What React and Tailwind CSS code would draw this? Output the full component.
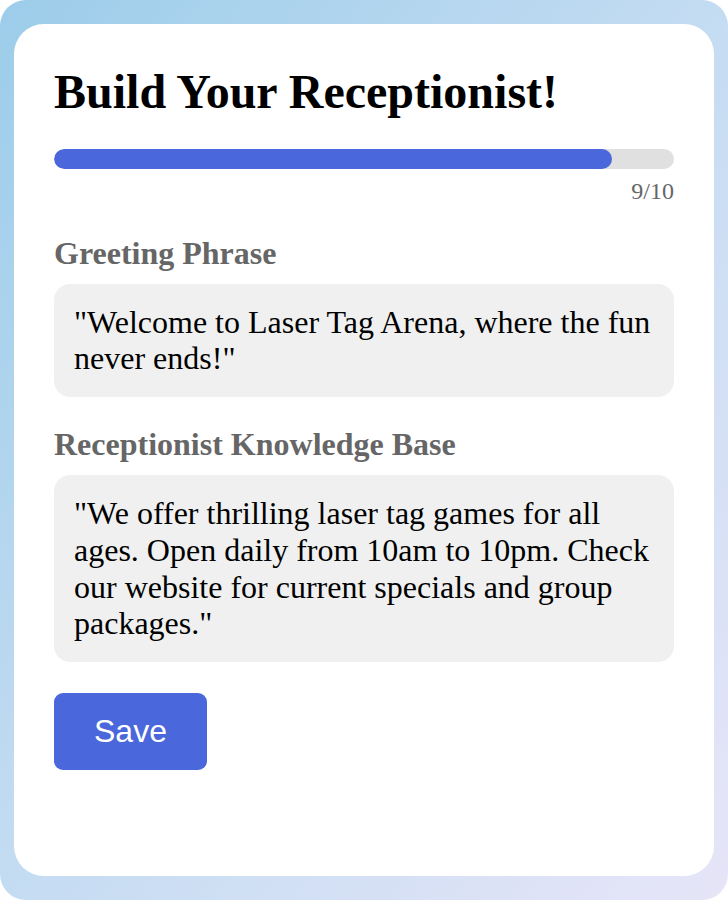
import React from "react";

const serif = { fontFamily: '"Liberation Serif", "Times New Roman", serif' };

function Field({ label, children }) {
  return (
    <div className="mt-[29px]">
      <div className="text-[32px] leading-[1.15] font-bold text-[#666666] mb-3">{label}</div>
      <div className="bg-[#f0f0f0] rounded-[16px] p-5 text-[32px] leading-[1.15] text-black">
        {children}
      </div>
    </div>
  );
}

export default function App() {
  const step = 9;
  const total = 10;
  return (
    <div
      className="w-[728px] h-[900px] rounded-[26px] bg-gradient-to-br from-[#9ccdea] via-[#c4dcf2] to-[#e7e5f8] px-[14px] py-6"
      style={serif}
    >
      <div className="h-full bg-white rounded-[30px] px-10 pt-10">
        <h1 className="text-[48px] leading-[1.15] font-bold text-black mb-[30px]">
          Build Your Receptionist!
        </h1>
        <div className="h-5 w-full rounded-full bg-[#e0e0e0] overflow-hidden">
          <div
            className="h-full rounded-full bg-[#4a67db]"
            style={{ width: `${(step / total) * 100}%` }}
          />
        </div>
        <div className="mt-[9px] text-right text-[24px] leading-[1.15] text-[#666666]">
          {step}/{total}
        </div>

        <Field label="Greeting Phrase">
          "Welcome to Laser Tag Arena, where the fun never ends!"
        </Field>

        <Field label="Receptionist Knowledge Base">
          "We offer thrilling laser tag games for all ages. Open daily from 10am to 10pm. Check our website for current specials and group packages."
        </Field>

        <button
          type="button"
          className="mt-[31px] bg-[#4a67db] text-white rounded-[9px] px-10 py-5 text-[32px] leading-[1.15]"
          style={{ fontFamily: '"Liberation Sans", Arial, sans-serif' }}
        >
          Save
        </button>
      </div>
    </div>
  );
}
